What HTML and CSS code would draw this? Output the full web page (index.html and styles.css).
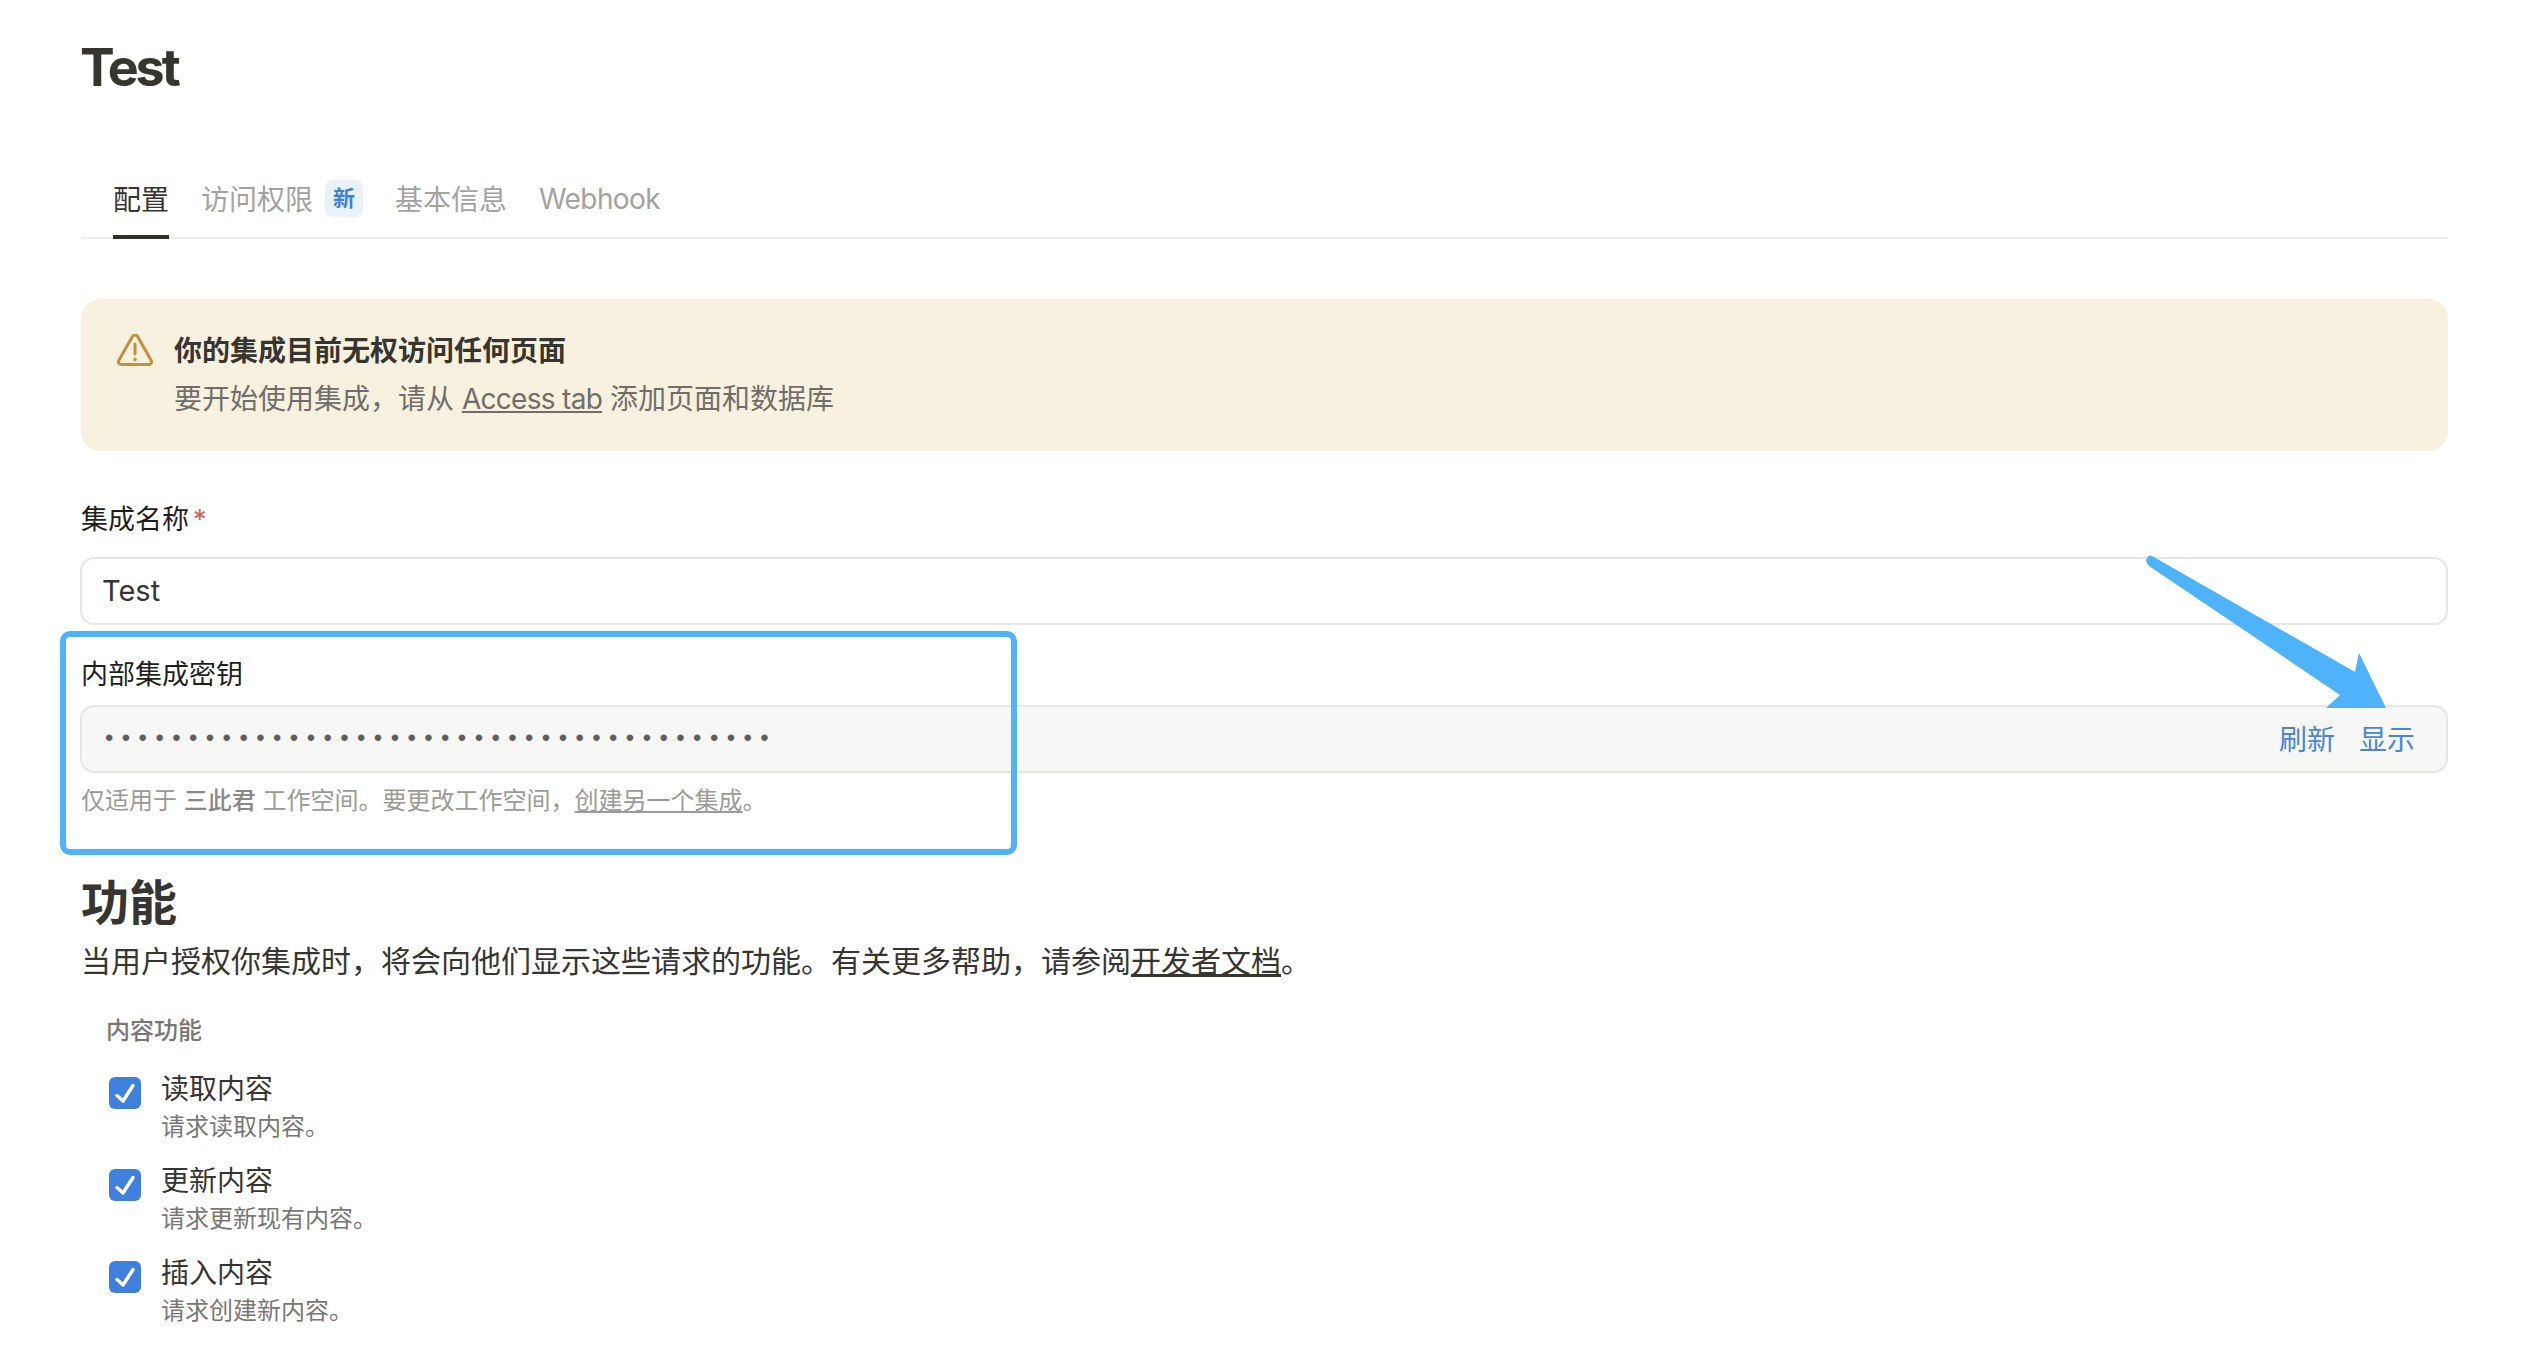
FILE: index.html
```html
<!DOCTYPE html>
<html lang="zh-CN">
<head>
<meta charset="utf-8">
<title>Test</title>
<link rel="stylesheet" href="styles.css">
</head>
<body>
<main class="page">
  <h1 class="title">Test</h1>
  <nav class="tabs">
    <a class="tab tab-active">配置</a>
    <a class="tab">访问权限<span class="badge">新</span></a>
    <a class="tab">基本信息</a>
    <a class="tab tab-latin">Webhook</a>
  </nav>
  <section class="banner">
    <svg class="banner-icon" viewBox="0 0 36 32" aria-hidden="true">
      <path d="M15.4 2.6 1.9 26.2C.8 28.2 2 30.5 4.3 30.5h27.4c2.3 0 3.5-2.3 2.4-4.3L20.6 2.6c-1.1-2-4-2-5.2 0Z"/>
      <path d="M18 10v10"/>
      <path class="dot" d="M18 25.2v.2"/>
    </svg>
    <div class="banner-text">
      <div class="banner-title">你的集成目前无权访问任何页面</div>
      <div class="banner-body">要开始使用集成，请从 <u class="latin-link">Access tab</u> 添加页面和数据库</div>
    </div>
  </section>
  <label class="field-label name-label">集成名称<span class="required">*</span></label>
  <div class="input">Test</div>
  <div class="key-field">
    <div class="highlight"></div>
    <label class="field-label key-label">内部集成密钥</label>
    <div class="input input-key">
      <span class="dots">••••••••••••••••••••••••••••••••••••••••</span>
      <span class="actions"><a>刷新</a><a>显示</a></span>
    </div>
    <p class="hint">仅适用于 <strong>三此君</strong> 工作空间。要更改工作空间，<u>创建另一个集成</u>。</p>
    <svg class="arrow" viewBox="0 0 250 165" aria-hidden="true">
      <path d="M12 6 215 122 219 103 246 158H186L200 145 12 18C7 15 5 11 7 8 8 6 10 5 12 6Z"/>
    </svg>
  </div>
  <h2 class="heading">功能</h2>
  <p class="desc">当用户授权你集成时，将会向他们显示这些请求的功能。有关更多帮助，请参阅<u>开发者文档</u>。</p>
  <div class="group-label">内容功能</div>
  <ul class="caps">
    <li class="cap">
      <svg class="check" viewBox="0 0 32 32" aria-hidden="true"><rect width="32" height="32" rx="6"/><path d="M8 18.500 14 24 24 8.500"/></svg>
      <div><div class="cap-name">读取内容</div><div class="cap-sub">请求读取内容。</div></div>
    </li>
    <li class="cap">
      <svg class="check" viewBox="0 0 32 32" aria-hidden="true"><rect width="32" height="32" rx="6"/><path d="M8 18.500 14 24 24 8.500"/></svg>
      <div><div class="cap-name">更新内容</div><div class="cap-sub">请求更新现有内容。</div></div>
    </li>
    <li class="cap">
      <svg class="check" viewBox="0 0 32 32" aria-hidden="true"><rect width="32" height="32" rx="6"/><path d="M8 18.500 14 24 24 8.500"/></svg>
      <div><div class="cap-name">插入内容</div><div class="cap-sub">请求创建新内容。</div></div>
    </li>
  </ul>
</main>
</body>
</html>
```
FILE: styles.css
```css
* { box-sizing: border-box; }
html, body { margin: 0; background: #fff; }
body {
  font-family: Inter, "Noto Sans CJK SC", sans-serif;
  color: #37352f;
  font-size: 28px;
  height: 1364px;
  overflow: hidden;
}
.page { padding: 37px 82px 0 81px; }
.title {
  margin: 0 0 0 -1px;
  font-size: 52px;
  line-height: 62px;
  font-weight: 700;
  letter-spacing: -3px;
}
.tabs {
  display: flex;
  gap: 32px;
  height: 80px;
  margin-top: 60px;
  padding-left: 32px;
  box-shadow: inset 0 -2px 0 #efefee;
  color: #a3a29f;
  font-size: 28px;
}
.tab {
  display: flex;
  align-items: center;
  padding-bottom: 2px;
  border-top: 4px solid transparent;
  border-bottom: 4px solid transparent;
}
.tab-latin { letter-spacing: -0.6px; padding-bottom: 0; }
.tab-active { color: #37352f; border-bottom-color: #2f2e2b; }
.badge {
  margin-left: 12px;
  width: 38px;
  height: 37px;
  border-radius: 8px;
  background: #e9f2fb;
  color: #3f80dc;
  font-size: 22px;
  font-weight: 700;
  line-height: 37px;
  text-align: center;
}
.banner {
  display: flex;
  height: 152px;
  margin-top: 60px;
  padding: 28px 0 0 36px;
  border-radius: 20px;
  background: #f9f1df;
}
.banner-icon {
  flex: none;
  width: 36px;
  height: 32px;
  margin: 7px 21px 0 0;
  fill: none;
  stroke: #c2913c;
  stroke-width: 3;
  stroke-linejoin: round;
  stroke-linecap: round;
}
.banner-icon .dot { stroke-width: 3.600; }
.banner-text { line-height: 48px; }
.banner-title { font-weight: 600; }
.banner-body { color: #6f6e69; }
.latin-link { letter-spacing: -0.7px; }
.field-label {
  display: block;
  font-size: 27px;
  line-height: 40px;
  color: #1f1e1b;
}
.name-label { margin-top: 49px; }
.required { margin-left: 4px; color: #e0584f; }
.input {
  display: flex;
  align-items: center;
  justify-content: space-between;
  height: 68px;
  margin: 17px 0 0 -1px;
  padding: 0 31px 2px 20px;
  border: 2px solid #e6e6e5;
  border-radius: 14px;
  font-size: 29px;
  background: #fff;
}
.key-field { position: relative; }
.key-label { margin-top: 30px; }
.input-key {
  margin-top: 10px;
  background: #f7f7f5;
}
.dots {
  padding-top: 3px;
  font-family: "Liberation Mono", monospace;
  font-size: 24px;
  letter-spacing: 2.400px;
  color: #5f5e5a;
}
.actions { display: flex; gap: 24px; color: #4a85dc; font-size: 28px; }
.hint {
  margin: 10px 0 0;
  font-size: 24px;
  line-height: 36px;
  color: #9b9a97;
}
.hint strong { font-weight: 500; color: #8a8985; }
.highlight {
  position: absolute;
  left: -21px;
  top: -24px;
  width: 957px;
  height: 224px;
  border: 6px solid #4fb3fc;
  border-radius: 10px;
}
.arrow {
  position: absolute;
  right: 58px;
  top: -105px;
  width: 250px;
  height: 165px;
  fill: #4fb3fc;
}
.heading {
  margin: 53.500px 0 0;
  font-size: 48px;
  line-height: 60px;
  font-weight: 700;
}
.desc {
  margin: 4px 0 0;
  font-size: 30px;
  line-height: 48px;
}
.group-label {
  margin: 28px 0 0 25px;
  font-size: 24px;
  line-height: 36px;
  font-weight: 500;
  color: #787774;
}
.caps {
  display: flex;
  flex-direction: column;
  gap: 16px;
  margin: 20px 0 0 28px;
  padding: 0;
  list-style: none;
}
.cap { display: flex; gap: 20px; }
.check {
  flex: none;
  width: 32px;
  height: 32px;
  margin-top: 8px;
}
.check rect { fill: #3f80dc; }
.check path {
  fill: none;
  stroke: #fff;
  stroke-width: 3.500;
  stroke-linecap: round;
  stroke-linejoin: round;
}
.cap-name { font-size: 28px; line-height: 40px; }
.cap-sub { font-size: 24px; line-height: 36px; color: #787774; }
```
